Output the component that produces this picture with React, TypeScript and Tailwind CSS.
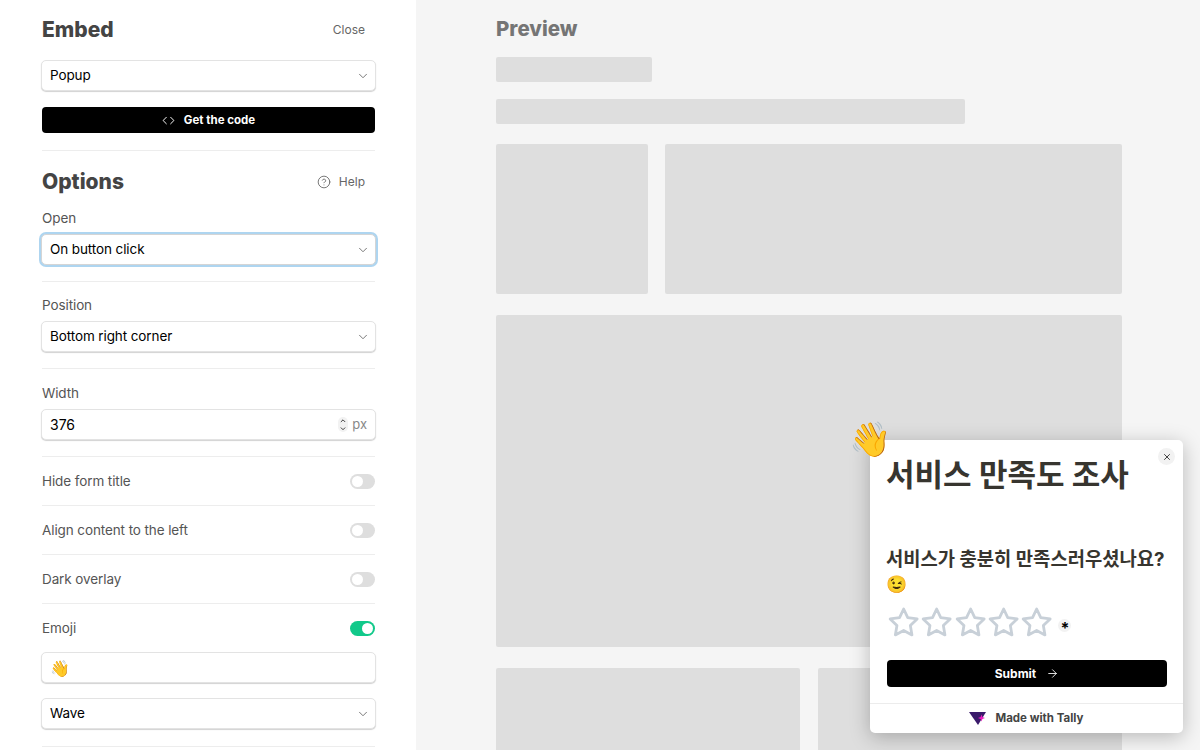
import { ArrowRight, ChevronDown, ChevronUp, CircleHelp, Code, X } from "lucide-react";

const uiFont = "[font-family:Inter,'Liberation_Sans',sans-serif]";

function Field({ label }: { label: string }) {
  return <div className="mx-px text-[13.5px] leading-5 tracking-[-0.1px] text-[#555]">{label}</div>;
}

function Divider() {
  return <div className="mx-px border-b border-[#ededed]" />;
}

function Select({ value, focused }: { value: string; focused?: boolean }) {
  return (
    <div
      className={`flex h-[31px] items-center justify-between rounded-[5px] bg-white pl-2 pr-[5px] text-[13.5px] tracking-[-0.1px] text-black ${
        focused
          ? "border border-[#d5d5d5] shadow-[0_0_0_2px_#aed5f0]"
          : "border border-[#e3e3e3] shadow-[0_1px_1px_rgba(0,0,0,0.18)]"
      }`}
    >
      <span>{value}</span>
      <ChevronDown size={14} strokeWidth={1.5} className="text-[#666]" />
    </div>
  );
}

function Toggle({ on }: { on?: boolean }) {
  return (
    <div
      className={`flex h-[15px] w-[25px] items-center rounded-full px-[2px] ${
        on ? "justify-end bg-[#12c98a]" : "justify-start bg-[#dedede]"
      }`}
    >
      <div className="size-[11px] rounded-full bg-white" />
    </div>
  );
}

function ToggleRow({ label, on, last }: { label: string; on?: boolean; last?: boolean }) {
  return (
    <div className={`mx-px flex items-center justify-between ${last ? "h-[48px]" : "h-[49px] border-b border-[#ededed]"}`}>
      <span className="text-[13.5px] tracking-[-0.1px] text-[#555]">{label}</span>
      <Toggle on={on} />
    </div>
  );
}

function Star() {
  return (
    <svg width="33.3" height="32" viewBox="0 0 33 32" fill="none" stroke="#c8d0d8" strokeWidth="2.8" strokeLinejoin="round">
      <path d="M16.5 3l4.1 8.6 9.4 1.3-6.8 6.6 1.6 9.4-8.3-4.5-8.3 4.5 1.6-9.4L3 12.9l9.4-1.3z" />
    </svg>
  );
}

export default function App() {
  return (
    <div className={`flex h-[750px] w-[1200px] overflow-hidden bg-[#f5f5f5] ${uiFont}`}>
      <aside className="h-full w-[416px] shrink-0 bg-white pl-[41px] pr-[40px]">
        <div className="mx-px flex h-[60px] items-center justify-between">
          <h1 className="text-[21px] font-extrabold text-[#444]">Embed</h1>
          <span className="pr-[10px] text-xs text-[#666]">Close</span>
        </div>
        <Select value="Popup" />
        <div className="mx-px mt-4 flex h-[26px] items-center justify-center gap-[9px] rounded-[4px] bg-black pt-px text-[11.5px] font-bold text-white">
          <Code size={13} strokeWidth={1.8} />
          <span>Get the code</span>
        </div>
        <div className="mt-[17px]">
          <Divider />
        </div>
        <div className="mx-px flex h-[61px] items-center justify-between">
          <h2 className="text-[21px] font-extrabold text-[#444]">Options</h2>
          <span className="flex items-center gap-2 pr-[10px] text-xs text-[#666]">
            <CircleHelp size={14} strokeWidth={1.5} />
            Help
          </span>
        </div>
        <div className="mt-[-4px]">
          <Field label="Open" />
        </div>
        <div className="mt-[6px]">
          <Select value="On button click" focused />
        </div>
        <div className="mt-4">
          <Divider />
        </div>
        <div className="mt-[13px]">
          <Field label="Position" />
        </div>
        <div className="mt-[6px]">
          <Select value="Bottom right corner" />
        </div>
        <div className="mt-4">
          <Divider />
        </div>
        <div className="mt-[14px]">
          <Field label="Width" />
        </div>
        <div className="mt-[6px] flex h-[31px] items-center justify-between rounded-[5px] border border-[#e3e3e3] bg-white pl-2 pr-2 text-sm text-black shadow-[0_1px_1px_rgba(0,0,0,0.18)]">
          <span>376</span>
          <span className="flex items-center gap-[4px]">
            <span className="flex h-[15px] w-[10px] flex-col items-center justify-center rounded-full bg-[#f2f2f2] text-[#333]">
              <ChevronUp size={8} strokeWidth={3} />
              <ChevronDown size={8} strokeWidth={3} />
            </span>
            <span className="text-[13px] text-[#888]">px</span>
          </span>
        </div>
        <div className="mt-4">
          <Divider />
        </div>
        <ToggleRow label="Hide form title" />
        <ToggleRow label="Align content to the left" />
        <ToggleRow label="Dark overlay" />
        <ToggleRow label="Emoji" on last />
        <div className="flex h-[31px] items-center rounded-[5px] border border-[#e3e3e3] bg-white pl-2 text-base shadow-[0_1px_1px_rgba(0,0,0,0.18)]">
          👋
        </div>
        <div className="mt-[15px]">
          <Select value="Wave" />
        </div>
        <div className="mt-[17px]">
          <Divider />
        </div>
      </aside>

      <main className="min-w-0 flex-1 pl-[80px] pr-[78px]">
        <div className="flex h-[57px] items-center pt-px">
          <h2 className="text-[20.5px] font-extrabold text-[#757575]">Preview</h2>
        </div>
        <div className="h-[25px] w-[156px] rounded-[2px] bg-[#dedede]" />
        <div className="mt-[17px] h-[25px] w-[469px] rounded-[2px] bg-[#dedede]" />
        <div className="mt-5 flex h-[150px] gap-[17px]">
          <div className="w-[152px] rounded-[2px] bg-[#dedede]" />
          <div className="flex-1 rounded-[2px] bg-[#dedede]" />
        </div>
        <div className="mt-[21px] h-[332px] rounded-[2px] bg-[#dedede]" />
        <div className="mt-[21px] flex h-[150px] gap-[18px]">
          <div className="flex-1 rounded-[2px] bg-[#dedede]" />
          <div className="flex-1 rounded-[2px] bg-[#dedede]" />
        </div>
      </main>

      <div className="absolute left-[870px] top-[440px] h-[293px] w-[313px] rounded-[5px] bg-white shadow-[0_4px_20px_rgba(0,0,0,0.25)]">
        <div className="absolute left-[-21px] top-[-18px] text-[34px] leading-none">👋</div>
        <div className="absolute right-[8px] top-[8px] flex size-[17px] items-center justify-center rounded-full bg-[#f2f2f2] text-[#333]">
          <X size={10} strokeWidth={2.2} />
        </div>
        <div className="pl-[17px] pr-[16px] [font-family:Inter,'Noto_Sans_CJK_KR',sans-serif]">
          <h3 className="-ml-px whitespace-nowrap pt-[15px] text-[31px] font-bold leading-[40px] text-[#37352f]">서비스 만족도 조사</h3>
          <div className="-ml-px mt-[52px] text-[18.8px] font-bold text-[#37352f]">
            <div className="h-[25px] whitespace-nowrap leading-[25px]">서비스가 충분히 만족스러우셨나요?</div>
            <div className="h-[25px] text-[17px] leading-[25px]">😉</div>
          </div>
          <div className="mt-[9px] flex items-center">
            <Star />
            <Star />
            <Star />
            <Star />
            <Star />
            <span className="ml-[5px] mt-[6px] flex size-[13px] items-center justify-center rounded-full bg-[#f2f2f2] pt-[6px] text-[16px] font-bold leading-none text-black">*</span>
          </div>
          <div className="mt-[22px] flex h-[27px] items-center justify-center gap-[10px] rounded-[4px] bg-black text-xs font-bold text-white">
            Submit
            <ArrowRight size={13} strokeWidth={1.6} />
          </div>
        </div>
        <div className="absolute inset-x-0 bottom-0 flex h-[30px] items-center justify-center gap-2 border-t border-[#ececec] text-[11.5px] font-bold text-[#444]">
          <svg width="18" height="15" viewBox="0 0 18 15">
            <path d="M0 1h17l-8 13z" fill="#3a1a6b" />
            <path d="M12.5 3.5l.9 2.6 2.6.9-2.6.9-.9 2.6-.9-2.6-2.6-.9 2.6-.9z" fill="#e91ec0" />
          </svg>
          Made with Tally
        </div>
      </div>
    </div>
  );
}
